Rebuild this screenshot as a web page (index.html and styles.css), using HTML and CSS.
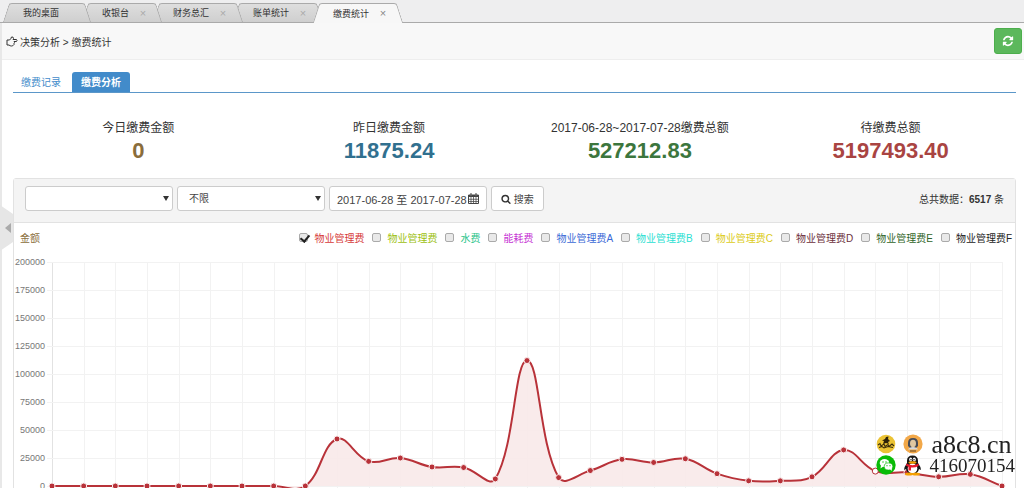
FILE: index.html
```html
<!DOCTYPE html>
<html lang="zh-CN">
<head>
<meta charset="utf-8">
<title>缴费统计</title>
<link rel="stylesheet" href="styles.css">
</head>
<body>
<nav class="window-tabs">
  <div class="wtab"><span>我的桌面</span></div>
  <div class="wtab"><span>收银台</span><button class="wtab-close" aria-label="关闭">×</button></div>
  <div class="wtab"><span>财务总汇</span><button class="wtab-close" aria-label="关闭">×</button></div>
  <div class="wtab"><span>账单统计</span><button class="wtab-close" aria-label="关闭">×</button></div>
  <div class="wtab wtab-active"><span>缴费统计</span><button class="wtab-close" aria-label="关闭">×</button></div>
</nav>
<div class="page">
  <button class="side-toggle" aria-label="展开侧栏">
    <svg width="13" height="46" viewBox="0 0 13 46"><path d="M0 0L13 9V37L0 46z" fill="#e6e6e6"/><path d="M5 23L11 18V28z" fill="#aaa"/></svg>
  </button>
  <header class="crumbs">
    <svg width="12" height="11" viewBox="0 0 24 22" fill="none" stroke="#333" stroke-width="2" stroke-linejoin="round"><path d="M2 8H7Q10 6 11 2Q15 1 15 5L14 7H21Q23 9 21 11H16Q18 13 16 14.500Q17 17 15 18Q14 20 11 20Q8 20 6 18H2z"/></svg>
    <span>决策分析 &gt; 缴费统计</span>
    <button class="refresh" aria-label="刷新">
      <svg width="12" height="12" viewBox="0 0 1792 1792" fill="#fff"><path d="M1639 1056q0 5-1 7-64 268-268 434.500t-478 166.500q-146 0-282.500-55t-243.500-157l-129 129q-19 19-45 19t-45-19-19-45v-448q0-26 19-45t45-19h448q26 0 45 19t19 45-19 45l-137 137q71 66 161 102t187 36q134 0 250-65t186-179q11-17 53-117 8-23 30-23h192q13 0 22.500 9.500t9.500 22.500zm25-800v448q0 26-19 45t-45 19h-448q-26 0-45-19t-19-45 19-45l138-138q-148-137-349-137-134 0-250 65t-186 179q-11 17-53 117-8 23-30 23h-199q-13 0-22.500-9.500t-9.500-22.500v-7q65-268 270-434.500t480-166.500q146 0 284 55.500t245 156.500l130-129q19-19 45-19t45 19 19 45z"/></svg>
    </button>
  </header>
  <main class="content">
    <nav class="subtabs">
      <a href="#records">缴费记录</a>
      <a href="#analysis" class="current">缴费分析</a>
    </nav>
    <section class="stats">
      <div class="stat"><span>今日缴费金额</span><strong class="brown">0</strong></div>
      <div class="stat"><span>昨日缴费金额</span><strong class="blue">11875.24</strong></div>
      <div class="stat"><span>2017-06-28~2017-07-28缴费总额</span><strong class="green">527212.83</strong></div>
      <div class="stat"><span>待缴费总额</span><strong class="red">5197493.40</strong></div>
    </section>
    <section class="panel">
      <form class="filters">
        <span class="picker"><select aria-label="小区"><option></option></select></span>
        <span class="picker"><select aria-label="类型"><option>不限</option></select></span>
        <button type="button" class="box">2017-06-28 至 2017-07-28
          <svg width="11" height="11" viewBox="0 0 22 22"><path d="M1 4H21V21H1z" fill="#fff" stroke="#444" stroke-width="2"/><path d="M1 4H21V8H1z" fill="#444"/><path d="M6 8V21M11 8V21M16 8V21M1 12.500H21M1 17H21" stroke="#444" stroke-width="1.500"/><path d="M6 1V6M16 1V6" stroke="#444" stroke-width="4"/><path d="M6 2V5M16 2V5" stroke="#fff" stroke-width="1"/></svg>
        </button>
        <button type="button" class="box search">
          <svg width="10" height="10" viewBox="0 0 1792 1792" fill="#333"><path d="M1216 832q0-185-131.500-316.500t-316.500-131.500-316.500 131.500-131.500 316.500 131.500 316.500 316.500 131.500 316.500-131.500 131.500-316.500zm512 832q0 52-38 90t-90 38q-54 0-90-38l-343-342q-179 124-399 124-143 0-273.500-55.500t-225-150-150-225-55.500-273.500 55.500-273.500 150-225 225-150 273.500-55.500 273.500 55.500 225 150 150 225 55.500 273.500q0 220-124 399l343 343q37 37 37 90z"/></svg>
          搜索</button>
        <span class="total">总共数据：<b>6517</b> 条</span>
      </form>
      <div class="legend">
        <span class="axis-name">金额</span>
        <label class="c1"><input type="checkbox" checked>物业管理费</label>
        <label class="c2"><input type="checkbox">物业管理费</label>
        <label class="c3"><input type="checkbox">水费</label>
        <label class="c4"><input type="checkbox">能耗费</label>
        <label class="c5"><input type="checkbox">物业管理费A</label>
        <label class="c6"><input type="checkbox">物业管理费B</label>
        <label class="c7"><input type="checkbox">物业管理费C</label>
        <label class="c8"><input type="checkbox">物业管理费D</label>
        <label class="c9"><input type="checkbox">物业管理费E</label>
        <label class="c10"><input type="checkbox">物业管理费F</label>
      </div>
      <svg class="chart" id="chart" role="img" aria-label="缴费金额"></svg>
    </section>
  </main>
</div>
<aside class="contact">
  <svg width="48" height="42" viewBox="0 0 48 42">
    <circle cx="10" cy="10" r="9.300" fill="#ebc334"/>
    <path d="M10 3L12.500 2.500L12 5L14 7L12 8L13 10L10 9L7 10L8 7L6 6.500L9 5z" fill="#2b2109"/>
    <path d="M2 11L4 9.500L5 12L8 10L9 12.500L12 10.500L13 12.500L16 10L18 12M3 13.500L6 12.500L8 14L12 12.500L17 13.500" fill="none" stroke="#3a2c0b" stroke-width="1.100"/>
    <circle cx="37" cy="10" r="9.600" fill="#f2a848"/>
    <path d="M32 12V9Q32 4 37 4T42 9V12L40 14H34z" fill="#454b58"/>
    <ellipse cx="37" cy="9.500" rx="3" ry="3.700" fill="#dfc6a0"/>
    <path d="M32 15.500Q33 13 37 13T42 15.500z" fill="#d8d8d8"/>
    <path d="M34 17H40" stroke="#604626"/>
    <circle cx="10" cy="31" r="9.700" fill="#09bb07"/>
    <ellipse cx="8.500" cy="29" rx="4.800" ry="4" fill="#fff"/><path d="M5 31L4.500 34.500L8 32z" fill="#fff"/>
    <ellipse cx="12.500" cy="32.500" rx="4.300" ry="3.600" fill="#fff" stroke="#09bb07" stroke-width=".7"/><path d="M14 35L15.500 37L16 34z" fill="#fff"/>
    <g fill="#09bb07"><circle cx="7" cy="28" r=".7"/><circle cx="10" cy="28" r=".7"/><circle cx="11" cy="31.700" r=".6"/><circle cx="14" cy="31.700" r=".6"/></g>
    <path d="M31 29V27Q31 21.500 36.500 21.500T42 27V29Q45 33 45 36L43 35Q42 40 36.500 40T30 35L28 36Q28 33 31 29z" fill="#161616"/>
    <ellipse cx="36.500" cy="34.500" rx="4.800" ry="5" fill="#fff"/>
    <ellipse cx="34.700" cy="25.500" rx="1.500" ry="2" fill="#fff"/><ellipse cx="38.300" cy="25.500" rx="1.500" ry="2" fill="#fff"/>
    <circle cx="35" cy="25.700" r=".7"/><circle cx="38" cy="25.700" r=".7"/>
    <ellipse cx="36.500" cy="28.500" rx="4" ry="1.200" fill="#f5a000"/>
    <path d="M30.500 29.500Q36.500 33 42.500 29.500V32Q39 34 35 33.500V36.500H32.500V33L30 31.500z" fill="#e5192b"/>
    <ellipse cx="33" cy="40" rx="4" ry="1.500" fill="#f5a000"/><ellipse cx="40" cy="40" rx="4" ry="1.500" fill="#f5a000"/>
  </svg>
  <div class="contact-text"><span class="site">a8c8.cn</span><span>416070154</span></div>
</aside>
<script src="chart.js"></script>
</body>
</html>
```
FILE: styles.css
```css
* { box-sizing: border-box; }
body {
  margin: 0;
  height: 100vh;
  overflow: hidden;
  display: flex;
  flex-direction: column;
  background: #fff;
  color: #333;
  font-family: "Liberation Sans", Arial, "Noto Sans CJK SC", sans-serif;
  font-size: 10px;
}
button, select { font: inherit; color: inherit; }
svg { flex: none; }

.window-tabs {
  display: flex;
  align-items: flex-end;
  flex: none;
  height: 23px;
  padding-left: 3px;
  background: #eeeeef;
  border-bottom: 1px solid #aaa;
}
.wtab {
  position: relative;
  z-index: 1;
  display: flex;
  align-items: center;
  justify-content: space-between;
  min-width: 80px;
  height: 19px;
  padding: 0 15px 0 20px;
  gap: 10px;
  font-size: 9px;
}
.wtab:first-child { min-width: 88px; z-index: 4; }
.wtab:nth-child(2) { z-index: 3; }
.wtab:nth-child(3) { z-index: 2; }
.wtab + .wtab { margin-left: -9px; }
.wtab::before, .wtab::after {
  content: "";
  position: absolute;
  z-index: -1;
  top: 0;
  bottom: 0;
  width: 50%;
  border-top: 1px solid #aaa;
  background: linear-gradient(#dedede, #cfcfcf);
}
.wtab::before {
  left: 3px;
  border-left: 1px solid #aaa;
  border-top-left-radius: 3px;
  transform: skewX(-18deg);
}
.wtab::after {
  right: 3px;
  border-right: 1px solid #aaa;
  border-top-right-radius: 3px;
  transform: skewX(18deg);
}
.wtab-active { z-index: 5; height: 20px; margin-bottom: -1px; }
.wtab-active::before, .wtab-active::after { background: #f7f7f7; }
.wtab-close {
  width: 8px;
  padding: 0;
  border: 0;
  background: none;
  color: #aaa;
  font-size: 11px;
  line-height: 12px;
}
.wtab-active .wtab-close { color: #888; }

.page {
  position: relative;
  flex: 1;
  min-height: 0;
  border-left: 2px solid #e8e8e8;
}
.side-toggle {
  position: absolute;
  left: -2px;
  top: 182px;
  padding: 0;
  border: 0;
  background: none;
}
.side-toggle svg { display: block; }
.crumbs {
  display: flex;
  align-items: center;
  gap: 2px;
  height: 37px;
  padding: 0 2px 0 4px;
  background: #f8f8f8;
  border-bottom: 1px solid #eee;
}
.refresh {
  display: flex;
  align-items: center;
  justify-content: center;
  width: 28px;
  height: 26px;
  margin-left: auto;
  padding: 0;
  border: 1px solid #4cae4c;
  border-radius: 3px;
  background: #5cb85c;
}
.content { padding: 12px 8px 0 11px; }

.subtabs { display: flex; border-bottom: 1px solid #5b97c9; }
.subtabs a {
  padding: 2px 8px 0;
  border-radius: 3px 3px 0 0;
  color: #428bca;
  line-height: 18px;
  text-decoration: none;
}
.subtabs .current {
  margin-left: 3px;
  padding: 2px 9px 0;
  background: #428bca;
  color: #fff;
  font-weight: bold;
}
.stats {
  display: grid;
  grid-template-columns: repeat(4, 1fr);
  padding: 26px 0 13px;
}
.stat { display: flex; flex-direction: column; align-items: center; }
.stat span { font-size: 12px; line-height: 18px; }
.stat strong { font-size: 22px; line-height: 28px; }
.brown { color: #8a6d3b; }
.blue { color: #31708f; }
.green { color: #3c763d; }
.red { color: #a94442; }

.panel { border: 1px solid #e2e2e2; border-radius: 3px; }
.filters {
  display: flex;
  align-items: center;
  gap: 4px;
  padding: 7px 11px 11px;
  background: #f4f4f4;
  border-bottom: 1px solid #e2e2e2;
}
.picker { position: relative; }
.picker::after {
  content: "";
  position: absolute;
  right: 4px;
  top: 10px;
  border: 3px solid transparent;
  border-top: 5px solid #333;
  border-bottom: 0;
  pointer-events: none;
}
.picker select, .box {
  height: 25px;
  border: 1px solid #ccc;
  border-radius: 3px;
  background: #fff;
  color: #444;
}
.picker select {
  display: block;
  appearance: none;
  width: 148px;
  padding: 0 11px;
}
.box {
  display: flex;
  align-items: center;
  gap: 1px;
  padding: 0 7px;
  font-size: 11px;
}
.search { gap: 3px; padding: 0 9px; font-size: 10px; }
.total { margin-left: auto; }

.legend {
  display: flex;
  align-items: center;
  gap: 8px;
  height: 29px;
  padding: 0 3px 0 6px;
}
.axis-name { margin-right: auto; color: #8a6d3b; }
.legend label { display: flex; align-items: center; gap: 6px; }
.legend input {
  appearance: none;
  display: grid;
  width: 9px;
  height: 9px;
  margin: 0;
  border: 1px solid #aaa;
  border-radius: 2px;
  background: #e9e9e9;
}
.legend input:checked::before {
  content: "";
  width: 4px;
  height: 7px;
  margin: -1px 0 0 2px;
  border: solid #222;
  border-width: 0 2px 2px 0;
  transform: rotate(40deg);
}
.c1 { color: #d63a3a; }
.c2 { color: #9dbf12; }
.c3 { color: #2bc48a; }
.c4 { color: #c634d4; }
.c5 { color: #3a69d6; }
.c6 { color: #2be0d2; }
.c7 { color: #dccb18; }
.c8 { color: #6b2f3b; }
.c9 { color: #2f6427; }
.c10 { color: #222; }

.chart { display: block; width: 100%; height: 270px; overflow: hidden; }
.grid { stroke: #f2f2f2; }
.axis { stroke: #e2e2e2; }
.tick { fill: #777; font-size: 9px; text-anchor: end; }
.area { fill: #f8e9e9; }
.line { fill: none; stroke: #b83239; stroke-width: 2; }
.dot { fill: #b83239; stroke: #fbeeee; }
.dot-open { fill: #fff; stroke: #b83239; }

.contact {
  position: fixed;
  right: 9px;
  bottom: 12px;
  display: flex;
  align-items: center;
  gap: 6px;
  color: #222;
  font-family: "Liberation Serif", "Times New Roman", serif;
  font-size: 19px;
  line-height: 20px;
}
.contact-text { display: flex; flex-direction: column; }
.site { padding-left: 2px; font-size: 26px; line-height: 22px; }
```
FILE: chart.js
```js
(function () {
  var svg = document.getElementById('chart');
  var values = [0, 0, 0, 0, 0, 0, 0, 0, 0, 42000, 22000, 25000, 17000, 16500, 6300, 112000,
    7500, 13800, 23800, 21000, 24300, 11000, 4600, 4600, 8200, 32200, 13300, 12000, 8200, 10400, 0];
  var top = 10, step = 28, left = 38, right = 13, max = 200000, base = top + step * 8;

  function add(name, cls, attrs, text) {
    var el = document.createElementNS('http://www.w3.org/2000/svg', name);
    el.setAttribute('class', cls);
    for (var k in attrs) el.setAttribute(k, attrs[k]);
    if (text !== undefined) el.textContent = text;
    svg.appendChild(el);
  }

  // Control points on both sides of b, along the chord from a to c.
  function controls(a, b, c) {
    var d1 = Math.hypot(b.x - a.x, b.y - a.y), d2 = Math.hypot(c.x - b.x, c.y - b.y);
    var f1 = 0.4 * d1 / (d1 + d2 || 1), f2 = 0.4 * d2 / (d1 + d2 || 1);
    return [b.x - f1 * (c.x - a.x), b.y - f1 * (c.y - a.y), b.x + f2 * (c.x - a.x), b.y + f2 * (c.y - a.y)];
  }

  function draw() {
    svg.textContent = '';
    var gap = (svg.clientWidth - left - right) / (values.length - 1);
    var end = left + gap * (values.length - 1);
    var pts = values.map(function (v, i) {
      return { x: left + gap * i, y: base - v / max * step * 8 };
    });
    var c = pts.map(function (p, i) { return controls(pts[i - 1] || p, p, pts[i + 1] || p); });
    var d = 'M' + pts[0].x + ' ' + pts[0].y;
    for (var i = 1; i < pts.length; i++) {
      d += 'C' + [c[i - 1][2], c[i - 1][3], c[i][0], c[i][1], pts[i].x, pts[i].y].join(' ');
    }
    pts.forEach(function (p, n) {
      var x = Math.round(p.x) + 0.5;
      add('line', n ? 'grid' : 'axis', { x1: x, x2: x, y1: top, y2: base + 5 });
    });
    for (var j = 0; j <= 8; j++) {
      var y = top + step * j;
      add('line', 'grid', { x1: left - 5, x2: end, y1: y + 0.5, y2: y + 0.5 });
      add('text', 'tick', { x: left - 7, y: y + 3 }, max - 25000 * j);
    }
    add('path', 'area', { d: d + 'L' + end + ' ' + base + 'L' + left + ' ' + base + 'z', 'fill-opacity': 0.9 });
    add('path', 'line', { d: d });
    pts.forEach(function (p, n) {
      add('circle', n === 26 ? 'dot-open' : 'dot', { cx: p.x, cy: p.y, r: 3 });
    });
  }

  draw();
  window.addEventListener('resize', draw);
})();
```
